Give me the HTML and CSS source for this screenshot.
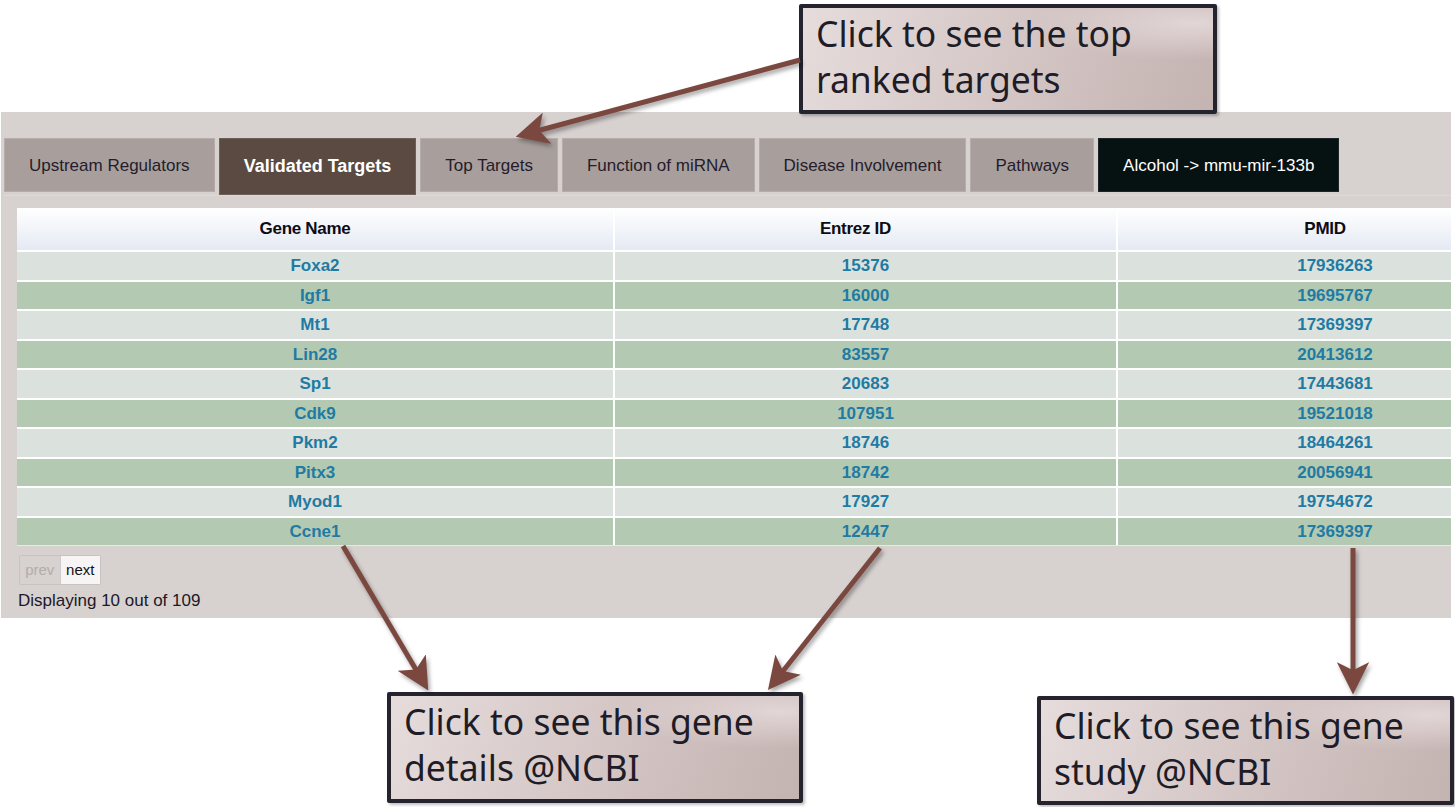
FILE: index.html
```html
<!DOCTYPE html>
<html>
<head>
<meta charset="utf-8">
<link rel="stylesheet" href="styles.css">
</head>
<body>
<div class="page">
  <div class="panel">
    <div class="tabs">
      <div class="tab">Upstream Regulators</div>
      <div class="tab active">Validated Targets</div>
      <div class="tab">Top Targets</div>
      <div class="tab">Function of miRNA</div>
      <div class="tab">Disease Involvement</div>
      <div class="tab">Pathways</div>
      <div class="tab dark">Alcohol -&gt; mmu-mir-133b</div>
    </div>
    <div class="table">
      <div class="row head"><div class="cell">Gene Name</div><div class="cell">Entrez ID</div><div class="cell">PMID</div></div>
      <div class="row odd"><div class="cell link">Foxa2</div><div class="cell link">15376</div><div class="cell link">17936263</div></div>
      <div class="row even"><div class="cell link">Igf1</div><div class="cell link">16000</div><div class="cell link">19695767</div></div>
      <div class="row odd"><div class="cell link">Mt1</div><div class="cell link">17748</div><div class="cell link">17369397</div></div>
      <div class="row even"><div class="cell link">Lin28</div><div class="cell link">83557</div><div class="cell link">20413612</div></div>
      <div class="row odd"><div class="cell link">Sp1</div><div class="cell link">20683</div><div class="cell link">17443681</div></div>
      <div class="row even"><div class="cell link">Cdk9</div><div class="cell link">107951</div><div class="cell link">19521018</div></div>
      <div class="row odd"><div class="cell link">Pkm2</div><div class="cell link">18746</div><div class="cell link">18464261</div></div>
      <div class="row even"><div class="cell link">Pitx3</div><div class="cell link">18742</div><div class="cell link">20056941</div></div>
      <div class="row odd"><div class="cell link">Myod1</div><div class="cell link">17927</div><div class="cell link">19754672</div></div>
      <div class="row even"><div class="cell link">Ccne1</div><div class="cell link">12447</div><div class="cell link">17369397</div></div>
    </div>
    <div class="pager"><span class="pbtn prev">prev</span><span class="pbtn next">next</span></div>
    <div class="count">Displaying 10 out of 109</div>
  </div>

  <div class="callout c1">Click to see the top<br>ranked targets</div>
  <div class="callout c2">Click to see this gene<br>details @NCBI</div>
  <div class="callout c3">Click to see this gene<br>study @NCBI</div>

  <svg class="arrows" width="1455" height="807" viewBox="0 0 1455 807">
    <defs>
      <marker id="ah" viewBox="0 0 10 10" refX="8" refY="5" markerWidth="6.5" markerHeight="6.5" orient="auto" markerUnits="strokeWidth">
        <path d="M0,0 L10,5 L0,10 L2.5,5 Z" fill="#7b4840"/>
      </marker>
    </defs>
    <g class="arrow-lines" stroke="#7b4840" stroke-width="5" fill="none" marker-end="url(#ah)">
      <line x1="800" y1="60" x2="522" y2="135"/>
      <line x1="343" y1="546" x2="425" y2="685"/>
      <line x1="880" y1="548" x2="772" y2="685"/>
      <line x1="1353" y1="548" x2="1353" y2="688"/>
    </g>
  </svg>
</div>
</body>
</html>
```

FILE: styles.css
```css
html, body {
  margin: 0;
  padding: 0;
  background: #ffffff;
}
.page {
  position: relative;
  width: 1455px;
  height: 807px;
  overflow: hidden;
  padding-top: 112px;
  box-sizing: border-box;
  font-family: "Liberation Sans", Arial, sans-serif;
}
.panel {
  margin-left: 1px;
  width: 1450px;
  height: 506px;
  background: #d7d1d0;
  overflow: hidden;
  box-sizing: border-box;
  padding: 26px 0 0 3px;
}
.tabs {
  display: flex;
  align-items: flex-start;
  gap: 4px;
  height: 57px;
  border-bottom: 1px solid #dedad9;
}
.tab {
  height: 54px;
  line-height: 54px;
  padding: 0 24px;
  background: #a89f9c;
  border: 1px solid #b6adaa;
  box-sizing: border-box;
  font-size: 17px;
  color: #241c2c;
  white-space: nowrap;
}
.tab.active {
  height: 57px;
  line-height: 55px;
  background: #5a4a42;
  border-color: #6d5e56;
  color: #ffffff;
  font-weight: bold;
  font-size: 18px;
}
.tab.dark {
  background: #061212;
  border-color: #1c2626;
  color: #ffffff;
}
.table {
  margin: 12px 0 0 13px;
  width: 1535px;
  display: flex;
  flex-direction: column;
  gap: 2px;
  background: #ffffff;
  border-bottom: 1px solid #e8e8e8;
}
.row {
  display: grid;
  grid-template-columns: 596px 501px 434px;
  column-gap: 2px;
  background: #ffffff;
}
.cell {
  height: 27.5px;
  line-height: 28px;
  text-align: center;
  font-size: 17px;
  font-weight: bold;
}
.head .cell {
  height: 42px;
  line-height: 42px;
  padding-right: 20px;
  color: #0c0c14;
  letter-spacing: -0.3px;
  background: linear-gradient(#ffffff, #e4e9f3);
}
.odd .cell { background: #dbe1dd; }
.even .cell { background: #b3c9b2; }
.link { color: #1f7ba3; }
.pager {
  margin: 9px 0 0 15px;
  display: flex;
  width: 82px;
  height: 30px;
  border: 1px solid #c8c2c1;
  border-radius: 2px;
  box-sizing: border-box;
}
.pbtn {
  flex: 1;
  text-align: center;
  line-height: 28px;
  font-size: 15px;
}
.prev { color: #b4acac; }
.next {
  color: #141018;
  background: #f6f4f4;
  border-left: 1px solid #d0caca;
}
.count {
  margin: 6px 0 0 14px;
  font-size: 17px;
  color: #201828;
}
.callout {
  position: absolute;
  box-sizing: border-box;
  border: 4px solid #24232e;
  border-radius: 2px;
  background: radial-gradient(ellipse at 95% 15%, #e2d6d6 0%, rgba(226,214,214,0) 30%),
              linear-gradient(110deg, #e6dcdc 0%, #d3c5c4 55%, #c3b3b1 100%);
  font-family: "Noto Sans", "Open Sans", sans-serif;
  font-size: 35.5px;
  line-height: 46px;
  color: #1e1c26;
  padding: 2px 0 0 13px;
  box-shadow: 2px 2px 3px rgba(0,0,0,0.25);
}
.c1 { left: 799px; top: 4px; width: 418px; height: 110px; }
.c2 { left: 387px; top: 692px; width: 416px; height: 111px; }
.c3 { left: 1037px; top: 696px; width: 417px; height: 109px; }
.arrows {
  position: absolute;
  left: 0;
  top: 0;
  pointer-events: none;
}
.arrow-lines {
  filter: drop-shadow(2px 3px 2px rgba(0,0,0,0.35));
}
```
